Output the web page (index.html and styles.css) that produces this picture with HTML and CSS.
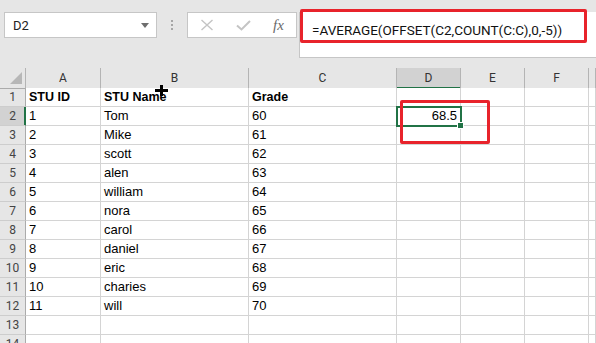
FILE: index.html
```html
<!DOCTYPE html>
<html>

<head>
    <title>Sheet1 - Excel</title>
    <meta charset="UTF-8">
    <link rel="stylesheet" href="styles.css">
</head>

<body>
    <div class="toolbar">
        <div class="name-box">
            <span>D2</span>
            <span class="caret"></span>
        </div>
        <div class="grip"><i></i><i></i><i></i></div>
        <div class="fx-box">
            <svg class="icon" width="14" height="12" viewBox="0 0 14 12">
                <path d="M1.5 1 L12.5 11 M12.5 1 L1.5 11" stroke="#c4c4c4" stroke-width="1.4" fill="none" />
            </svg>
            <svg class="icon" width="15" height="11" viewBox="0 0 15 11">
                <path d="M1 5.5 L5.5 9.5 L14 1" stroke="#c4c4c4" stroke-width="2" fill="none" />
            </svg>
            <span class="fx">fx</span>
        </div>
        <div class="formula-bar">=AVERAGE(OFFSET(C2,COUNT(C:C),0,-5))</div>
    </div>

    <div class="sheet">
        <div class="row head">
            <div class="corner"><span></span></div>
            <div>A</div>
            <div>B</div>
            <div>C</div>
            <div class="current">D</div>
            <div>E</div>
            <div>F</div>
            <div></div>
        </div>
        <div class="row">
            <div class="num">1</div>
            <div class="b">STU ID</div>
            <div class="b">STU Name</div>
            <div class="b">Grade</div>
            <div></div><div></div><div></div><div></div>
        </div>
        <div class="row">
            <div class="num current">2</div>
            <div>1</div>
            <div>Tom</div>
            <div>60</div>
            <div class="active">68.5<span class="handle"></span></div>
            <div></div><div></div><div></div>
        </div>
        <div class="row">
            <div class="num">3</div>
            <div>2</div><div>Mike</div><div>61</div>
            <div></div><div></div><div></div><div></div>
        </div>
        <div class="row">
            <div class="num">4</div>
            <div>3</div><div>scott</div><div>62</div>
            <div></div><div></div><div></div><div></div>
        </div>
        <div class="row">
            <div class="num">5</div>
            <div>4</div><div>alen</div><div>63</div>
            <div></div><div></div><div></div><div></div>
        </div>
        <div class="row">
            <div class="num">6</div>
            <div>5</div><div>william</div><div>64</div>
            <div></div><div></div><div></div><div></div>
        </div>
        <div class="row">
            <div class="num">7</div>
            <div>6</div><div>nora</div><div>65</div>
            <div></div><div></div><div></div><div></div>
        </div>
        <div class="row">
            <div class="num">8</div>
            <div>7</div><div>carol</div><div>66</div>
            <div></div><div></div><div></div><div></div>
        </div>
        <div class="row">
            <div class="num">9</div>
            <div>8</div><div>daniel</div><div>67</div>
            <div></div><div></div><div></div><div></div>
        </div>
        <div class="row">
            <div class="num">10</div>
            <div>9</div><div>eric</div><div>68</div>
            <div></div><div></div><div></div><div></div>
        </div>
        <div class="row">
            <div class="num">11</div>
            <div>10</div><div>charies</div><div>69</div>
            <div></div><div></div><div></div><div></div>
        </div>
        <div class="row">
            <div class="num">12</div>
            <div>11</div><div>will</div><div>70</div>
            <div></div><div></div><div></div><div></div>
        </div>
        <div class="row">
            <div class="num">13</div>
            <div></div><div></div><div></div>
            <div></div><div></div><div></div><div></div>
        </div>
        <div class="row">
            <div class="num">14</div>
            <div></div><div></div><div></div>
            <div></div><div></div><div></div><div></div>
        </div>
    </div>

    <!-- annotation marks -->
    <div class="mark mark-formula"></div>
    <div class="mark mark-cell"></div>

    <svg class="cursor" width="13" height="11" viewBox="0 0 13 11">
        <path d="M0 4 H13 V7 H0 Z M5 0 H8 V11 H5 Z" fill="#000" />
    </svg>
</body>

</html>
```

FILE: styles.css
```css
:root {
    --chrome: #e6e6e6;
    --field-border: #c6c6c6;
    --grid: #d4d4d4;
    --head-line: #b4b4b4;
    --selected-head: #d2d2d2;
    --green: #217346;
    --red: #e8232b;
}

body {
    margin: 0;
    position: relative;
    width: 596px;
    height: 343px;
    overflow: hidden;
    background: var(--chrome);
    font-family: "Liberation Sans", Arial, sans-serif;
    color: #000;
}

.toolbar {
    display: flex;
    align-items: flex-start;
    height: 68px;
    padding: 12px 0 0 4px;
    box-sizing: border-box;
}

.name-box {
    width: 153px;
    height: 26px;
    box-sizing: border-box;
    border: 1px solid var(--field-border);
    background: #fff;
    display: flex;
    align-items: center;
    justify-content: space-between;
    padding: 0 7px 0 8px;
    font-family: Roboto, sans-serif;
    font-size: 13px;
    color: #222;
}

.caret {
    width: 0;
    height: 0;
    border-left: 4px solid transparent;
    border-right: 4px solid transparent;
    border-top: 5px solid #6e6e6e;
}

.grip {
    width: 30px;
    height: 26px;
    display: flex;
    flex-direction: column;
    align-items: center;
    justify-content: center;
    gap: 2px;
}

.grip i {
    width: 2px;
    height: 2px;
    background: #a6a6a6;
}

.fx-box {
    width: 110px;
    height: 26px;
    box-sizing: border-box;
    border: 1px solid var(--field-border);
    background: #fff;
    display: flex;
    align-items: center;
    padding-left: 12px;
}

.fx-box .icon {
    margin-right: 22px;
}

.fx {
    font-family: "Liberation Serif", serif;
    font-style: italic;
    font-size: 15px;
    color: #6a6a6a;
}

.formula-bar {
    flex: 1;
    margin-left: 2px;
    height: 46px;
    box-sizing: border-box;
    border-bottom: 1px solid var(--field-border);
    border-left: 1px solid var(--field-border);
    background: #fff;
    padding: 6px 0 0 12px;
    font-family: Roboto, sans-serif;
    font-size: 13.5px;
    line-height: 24px;
    color: #111;
}

/* grid */

.row {
    display: grid;
    grid-template-columns: 26px 75px 148px 148px 64px 64px 64px 1fr;
    height: 19px;
}

.row>div {
    box-sizing: border-box;
    border-right: 1px solid var(--grid);
    border-bottom: 1px solid var(--grid);
    background: #fff;
    padding: 0 3px;
    font-size: 13px;
    line-height: 18px;
    white-space: nowrap;
}

.row .b {
    font-weight: bold;
    font-size: 12.5px;
}

.row.head {
    height: 20px;
}

.row.head>div {
    background: var(--chrome);
    border-right-color: var(--head-line);
    border-bottom-color: #ababab;
    text-align: center;
    font-family: Roboto, sans-serif;
    font-size: 12px;
    line-height: 20px;
    color: #333;
}

.row.head>div.current {
    background: var(--selected-head);
    border-bottom-color: var(--green);
    box-shadow: inset 0 -1px 0 var(--green);
}

.corner {
    position: relative;
}

.corner span {
    position: absolute;
    right: 3px;
    bottom: 4px;
    width: 0;
    height: 0;
    border-left: 12px solid transparent;
    border-bottom: 12px solid #b7b7b7;
}

.row>div.num {
    background: var(--chrome);
    border-right-color: #ababab;
    border-bottom-color: #cdcdcd;
    text-align: center;
    padding: 0;
    font-family: Roboto, sans-serif;
    font-size: 12px;
    color: #444;
}

.row>div.num.current {
    background: var(--selected-head);
    border-right-color: var(--green);
    box-shadow: inset -1px 0 0 var(--green);
}

.row>div.active {
    position: relative;
    text-align: right;
    padding-right: 3px;
}

.active::after {
    content: "";
    position: absolute;
    left: -1px;
    top: -1px;
    right: -2px;
    bottom: -2px;
    border: 2px solid var(--green);
}

.handle {
    position: absolute;
    right: -4px;
    bottom: -4px;
    width: 5px;
    height: 5px;
    background: var(--green);
    border: 1px solid #fff;
    z-index: 1;
}

/* red annotation frames */

.mark {
    position: absolute;
    border: 3px solid var(--red);
    border-radius: 2px;
    box-sizing: border-box;
}

.mark-formula {
    left: 300px;
    top: 9px;
    width: 287px;
    height: 34px;
}

.mark-cell {
    left: 400px;
    top: 100px;
    width: 90px;
    height: 44px;
}

.cursor {
    position: absolute;
    left: 155px;
    top: 85px;
}
```
